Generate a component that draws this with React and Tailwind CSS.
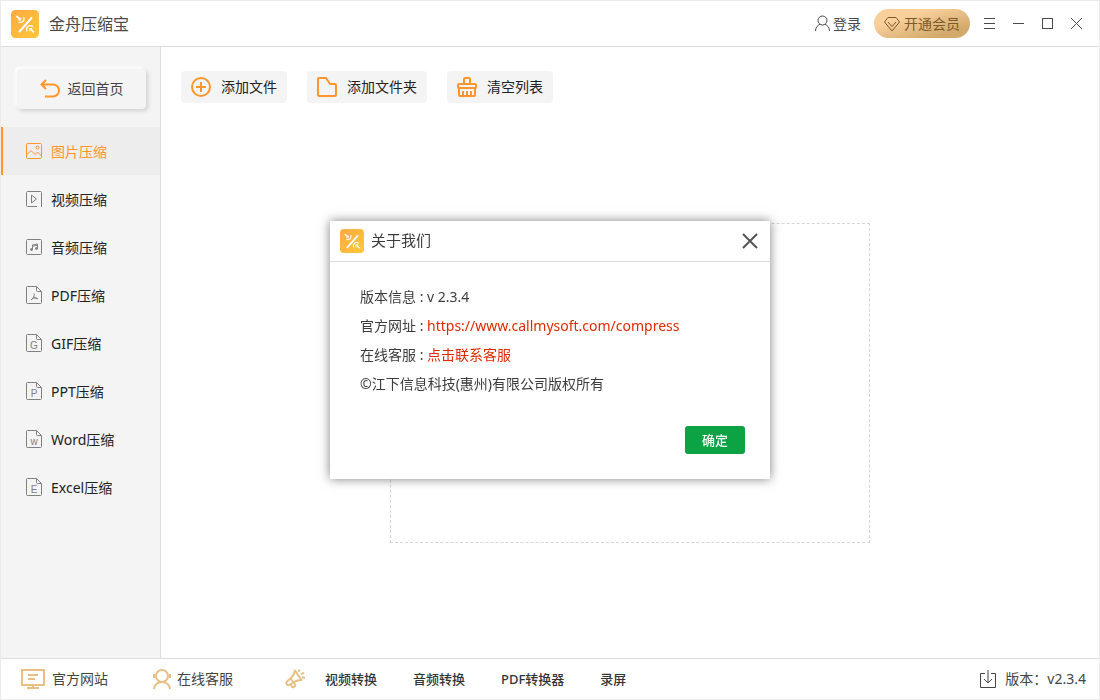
import { useState } from "react";
import clsx from "clsx";

function Logo({ className }) {
  return (
    <svg viewBox="0 0 28 28" className={className} aria-hidden="true">
      <defs>
        <linearGradient id="logo-bg" x1="0" y1="0" x2="1" y2="1">
          <stop offset="0" stopColor="#ffa943" />
          <stop offset="1" stopColor="#ffc838" />
        </linearGradient>
      </defs>
      <rect width="28" height="28" rx="4.5" fill="url(#logo-bg)" />
      <g fill="none" stroke="#fff" strokeLinecap="round" strokeLinejoin="round">
        <path d="M20.500 8 8.500 21.500" strokeWidth="2" />
        <path d="m6 6.500 3.200 2.800" strokeWidth="1.700" />
        <path d="M12.800 7.500c1 3.200-1.400 5.400-4.800 4.800" strokeWidth="1.300" />
        <path d="M9.800 8v2H7.500" strokeWidth=".9" />
        <path d="m22.300 21.800-3-2.800" strokeWidth="1.700" />
        <path d="M15.800 21c-1.200-3.600 2-6.600 5.800-4.800" strokeWidth="1.300" />
        <path d="M18.500 21v-2.500h2.600" strokeWidth=".9" />
      </g>
    </svg>
  );
}

function StrokeIcon({ size = 18, width = 1, className, children }) {
  return (
    <svg
      width={size}
      height={size}
      viewBox={`0 0 ${size} ${size}`}
      fill="none"
      stroke="currentColor"
      strokeWidth={width}
      className={clsx("shrink-0", className)}
      aria-hidden="true"
    >
      {children}
    </svg>
  );
}

function FileIcon({ letter }) {
  return (
    <StrokeIcon>
      <path d="M11.5.5h-9a1 1 0 0 0-1 1v15a1 1 0 0 0 1 1h13a1 1 0 0 0 1-1v-11z" />
      <path d="M11.5.5v4a1 1 0 0 0 1 1h4" />
      {letter ? (
        <text
          x="9"
          y="15"
          textAnchor="middle"
          fontSize="10"
          fill="currentColor"
          stroke="none"
          className="font-['Liberation_Sans',sans-serif]"
        >
          {letter}
        </text>
      ) : (
        <path d="M9 7.5c.8 2-.4 5-3 6.5m2.6-3.5c1 1.6 2.4 2.4 4.4 2.2M7 12.8c1.6-.8 3.2-1 5-.8" />
      )}
    </StrokeIcon>
  );
}

const navItems = [
  {
    title: "图片压缩",
    icon: (
      <StrokeIcon>
        <rect x="1.5" y="1.5" width="15" height="15" rx="1" />
        <circle cx="12.5" cy="5.5" r="1.5" />
        <path d="m1.5 13 4.5-4.5 4 4 2.5-2.5 4 4" />
      </StrokeIcon>
    ),
  },
  {
    title: "视频压缩",
    icon: (
      <StrokeIcon>
        <path d="M12 16.5H2.5a1 1 0 0 1-1-1v-13a1 1 0 0 1 1-1h13a1 1 0 0 1 1 1V17" />
        <path d="M6.5 5v8l5-4z" />
      </StrokeIcon>
    ),
  },
  {
    title: "音频压缩",
    icon: (
      <StrokeIcon>
        <rect x="1.5" y="1.5" width="15" height="15" rx="1" />
        <path d="M7.5 11.5V7l5-1v4.5M7.5 8.2l5-1" />
        <circle cx="6.5" cy="11.5" r="1" fill="currentColor" />
        <circle cx="11.5" cy="10.5" r="1" fill="currentColor" />
      </StrokeIcon>
    ),
  },
  { title: "PDF压缩", icon: <FileIcon /> },
  { title: "GIF压缩", icon: <FileIcon letter="G" /> },
  { title: "PPT压缩", icon: <FileIcon letter="P" /> },
  { title: "Word压缩", icon: <FileIcon letter="w" /> },
  { title: "Excel压缩", icon: <FileIcon letter="E" /> },
];

const toolbarItems = [
  {
    title: "添加文件",
    icon: (
      <StrokeIcon size={20} width={2}>
        <circle cx="10" cy="10" r="9" />
        <path d="M10 5v10M5 10h10" />
      </StrokeIcon>
    ),
  },
  {
    title: "添加文件夹",
    icon: (
      <StrokeIcon size={20} width={2}>
        <path
          d="M2 1h7l4 6h5a1 1 0 0 1 1 1v10a1 1 0 0 1-1 1H2a1 1 0 0 1-1-1V2a1 1 0 0 1 1-1z"
          strokeLinejoin="round"
        />
      </StrokeIcon>
    ),
  },
  {
    title: "清空列表",
    icon: (
      <StrokeIcon size={20} width={2}>
        <path d="M7 7V2a1 1 0 0 1 1-1h4a1 1 0 0 1 1 1v5" />
        <rect x="1" y="7" width="18" height="4" rx="1" />
        <path d="M2 11v7a1 1 0 0 0 1 1h14a1 1 0 0 0 1-1v-7M6 14v5M10 14v5M14 14v5" />
      </StrokeIcon>
    ),
  },
];

const productLinks = ["视频转换", "音频转换", "PDF转换器", "录屏"];

function WindowButton({ label, children }) {
  return (
    <button
      type="button"
      aria-label={label}
      className="flex h-7 w-[29px] items-center justify-center"
    >
      <StrokeIcon size={13}>{children}</StrokeIcon>
    </button>
  );
}

function TitleBar() {
  return (
    <header className="flex h-[46px] shrink-0 items-center border-b border-[#dcdcdc] pr-2 pl-2.5 text-[#4a4a4a]">
      <Logo className="size-7" />
      <h1 className="ml-2.5 text-base">金舟压缩宝</h1>

      <button type="button" className="ml-auto flex items-center gap-0.5 text-sm">
        <StrokeIcon size={17}>
          <circle cx="8.5" cy="5.5" r="4.5" />
          <path d="M1.5 16c0-3.6 2.2-6 4.8-6.7M15.5 16c0-3.6-2.2-6-4.8-6.7" />
        </StrokeIcon>
        登录
      </button>
      <button
        type="button"
        className="ml-[13px] flex h-[29px] w-24 items-center justify-center gap-1 rounded-full bg-linear-to-br from-[#f9cf9c] from-30% to-[#d3aa6c] to-80% text-sm text-[#7a5a28]"
      >
        <StrokeIcon size={16}>
          <path d="M4 1.5h8L15.5 6 8 15 .5 6z" strokeLinejoin="round" />
          <path d="m4 6 4 4.5L12 6" />
        </StrokeIcon>
        开通会员
      </button>

      <div className="ml-[5px] flex">
        <WindowButton label="菜单">
          <path d="M1 1.5h11M1 6.5h11M1 11.5h11" />
        </WindowButton>
        <WindowButton label="最小化">
          <path d="M1 6.5h11" />
        </WindowButton>
        <WindowButton label="最大化">
          <rect x="1.5" y="1.5" width="10" height="10" />
        </WindowButton>
        <WindowButton label="关闭">
          <path d="m1 1 11 11M12 1 1 12" />
        </WindowButton>
      </div>
    </header>
  );
}

function Sidebar({ active, onSelect }) {
  return (
    <aside className="w-40 shrink-0 border-r border-[#dcdcdc] bg-[#f4f4f4]">
      <div className="pt-[22px] pr-3.5 pb-[18px] pl-4">
        <button
          type="button"
          className="flex h-10 w-full items-center justify-center gap-2 rounded bg-[#f4f4f4] text-sm text-[#444] shadow-[2px_2px_4px_#d0d0d0,-2px_-2px_2px_#fff]"
        >
          <StrokeIcon size={20} width={2} className="text-[#ff952b]">
            <path d="M6 1 1.5 5.5 6 10" />
            <path d="M2 5.5h11a6 6 0 0 1 0 12H5" />
          </StrokeIcon>
          返回首页
        </button>
      </div>
      <nav>
        {navItems.map((item) => {
          const isActive = item.title === active;
          return (
            <button
              key={item.title}
              type="button"
              onClick={() => onSelect(item.title)}
              className={clsx(
                "flex h-12 w-full items-center gap-2 border-l-2 pl-[22px] text-sm",
                isActive
                  ? "border-[#ff952b] bg-[#ededed] text-[#ff952b]"
                  : "border-transparent text-[#808080]",
              )}
            >
              {item.icon}
              <span className={clsx("pt-0.5", !isActive && "text-[#222]")}>
                {item.title}
              </span>
            </button>
          );
        })}
      </nav>
    </aside>
  );
}

function Footer() {
  return (
    <footer className="flex h-[41px] shrink-0 items-center border-t border-[#dcdcdc] px-[13px] text-sm text-[#444]">
      <a href="#site" className="ml-[7px] flex items-center gap-[7px]">
        <svg
          width="24"
          height="20"
          fill="none"
          stroke="#e9bf86"
          strokeWidth="2"
          aria-hidden="true"
        >
          <path d="M1 1h22v15H1zM12 16v3M6 19h12M7 6h10M7 10h7" />
        </svg>
        官方网站
      </a>
      <a href="#service" className="ml-11 flex items-center gap-[5px]">
        <StrokeIcon size={20} width={2} className="text-[#e9bf86]">
          <circle cx="10" cy="7" r="6" />
          <path d="M2 5v4M18 5v4M2 20c.5-4 3.5-7 8-7s7.5 3 8 7" />
        </StrokeIcon>
        在线客服
      </a>
      <StrokeIcon size={22} width={2} className="ml-[51px] text-[#e9bf86]">
        <g strokeLinejoin="round">
          <path d="M11 2.500 17.500 12c-3 0-5.500.7-8 2.300L5 17c-1.600.8-3.600-2-2.300-3.300L7 10c2-2 3.500-4.500 4-7.500z" />
          <path d="m6.500 10.500 3 4M7 16.500l.8 2c.9 1.600 3.700.4 3.200-1.500l-.7-2" />
        </g>
        <path d="m14.500 4 1-2.500M17 6.500l3-2M18 9.500h3" />
      </StrokeIcon>
      <nav className="ml-[19px] flex items-center gap-9 text-[13px] font-medium text-[#333]">
        {productLinks.map((name) => (
          <a key={name} href="#product">
            {name}
          </a>
        ))}
      </nav>
      <a href="#version" className="ml-auto flex items-center gap-2">
        <StrokeIcon size={18}>
          <path d="M6 3.5H1.5v14h15v-14H12M9 0v13M5 9l4 4 4-4" />
        </StrokeIcon>
        版本：v2.3.4
      </a>
    </footer>
  );
}

function AboutDialog({ onClose }) {
  return (
    <div className="fixed inset-0 flex items-center justify-center">
      <div
        role="dialog"
        aria-labelledby="about-title"
        className="w-[440px] bg-white text-sm text-[#3c3c3c] shadow-[0_0_10px_rgba(0,0,0,0.5)]"
      >
        <div className="flex h-[41px] items-center border-b border-[#dcdcdc] px-2.5">
          <Logo className="size-6" />
          <h2 id="about-title" className="ml-[7px] text-[15px]">
            关于我们
          </h2>
          <button
            type="button"
            aria-label="关闭"
            onClick={onClose}
            className="ml-auto flex size-5 items-center justify-center text-[#555]"
          >
            <StrokeIcon size={16} width={2}>
              <path d="m1 1 14 14M15 1 1 15" />
            </StrokeIcon>
          </button>
        </div>
        <div className="px-[30px] pt-5 leading-[29px]">
          <p>版本信息 : v 2.3.4</p>
          <p>
            官方网址 :{" "}
            <a
              href="https://www.callmysoft.com/compress"
              className="text-[#e02a00]"
            >
              https://www.callmysoft.com/compress
            </a>
          </p>
          <p>
            在线客服 :{" "}
            <a href="#service" className="text-[#e02a00]">
              点击联系客服
            </a>
          </p>
          <p>©江下信息科技(惠州)有限公司版权所有</p>
        </div>
        <div className="flex justify-end px-[25px] pt-7 pb-[25px]">
          <button
            type="button"
            onClick={onClose}
            className="h-7 w-15 rounded-[3px] bg-[#0ca345] text-[13px] font-medium text-white"
          >
            确定
          </button>
        </div>
      </div>
    </div>
  );
}

export default function App() {
  const [active, setActive] = useState("图片压缩");
  const [aboutOpen, setAboutOpen] = useState(true);

  return (
    <div className="flex min-h-screen flex-col border border-[#ebebeb] bg-white font-['Noto_Sans','Noto_Sans_CJK_SC',sans-serif]">
      <TitleBar />
      <div className="flex flex-1">
        <Sidebar active={active} onSelect={setActive} />
        <main className="flex flex-1 flex-col px-5">
          <div className="flex gap-5 pt-6 pb-[5px]">
            {toolbarItems.map((item) => (
              <button
                key={item.title}
                type="button"
                className="flex h-8 items-center gap-2.5 rounded bg-[#f4f4f4] px-2.5 text-sm text-[#222]"
              >
                <span className="text-[#ff952b]">{item.icon}</span>
                {item.title}
              </button>
            ))}
          </div>
          <div className="flex flex-1 items-center justify-center">
            <div className="h-80 w-[480px] border border-dashed border-[#d6d6d6]" />
          </div>
        </main>
      </div>
      <Footer />
      {aboutOpen && <AboutDialog onClose={() => setAboutOpen(false)} />}
    </div>
  );
}
